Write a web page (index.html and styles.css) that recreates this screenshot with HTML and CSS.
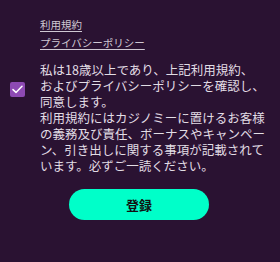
FILE: index.html
```html
<!DOCTYPE html>
<html>
  <head>
    <meta charset="UTF-8" />
    <title>登録</title>
    <link rel="stylesheet" href="styles.css">
  </head>
  <body>
    <div class="wrap">
      <div class="links">
        <a href="#">利用規約</a>
        <a href="#">プライバシーポリシー</a>
      </div>

      <label class="agree">
        <span class="check">
          <svg width="11" height="9" viewBox="0 0 11 9">
            <path d="M1 4.6 L4 7.4 L10 1.2" fill="none" stroke="#fff" stroke-width="1.5" stroke-linecap="round" stroke-linejoin="round" />
          </svg>
        </span>
        <p class="terms">私は18歳以上であり、上記利用規約、<br />およびプライバシーポリシーを確認し、<br />同意します。<br />利用規約にはカジノミーに置けるお客様の義務及び責任、ボーナスやキャンペーン、引き出しに関する事項が記載されています。必ずご一読ください。</p>
      </label>

      <button class="submit">登録</button>
    </div>
  </body>
</html>
```

FILE: styles.css
```css
html, body {
  margin: 0;
  height: 100%;
  background-color: #2a1232;
  font-family: "Noto Sans CJK JP", "Noto Sans", sans-serif;
  color: #e2dde5;
}

.wrap {
  padding: 16px 10px 0 10px;
}

.links {
  padding-left: 30px;
}

.links a {
  display: block;
  font-size: 10.5px;
  line-height: 17.5px;
  color: #cfc8d3;
  text-underline-offset: 2px;
}

.agree {
  display: flex;
  align-items: flex-start;
  margin-top: 11px;
}

.check {
  flex: none;
  width: 15px;
  height: 15px;
  margin-top: 20px;
  margin-right: 15px;
  border-radius: 2px;
  background-color: #8d4ab3;
  display: flex;
  justify-content: center;
  align-items: center;
}

.terms {
  margin: 0;
  width: 228px;
  font-size: 12.5px;
  line-height: 16px;
}

.submit {
  display: block;
  width: 140px;
  height: 31px;
  margin: 15px 0 0 59px;
  border: none;
  border-radius: 16px;
  background-color: #00ffc9;
  color: #111;
  font-family: "Noto Sans CJK JP", sans-serif;
  font-size: 13px;
  font-weight: bold;
}
```
